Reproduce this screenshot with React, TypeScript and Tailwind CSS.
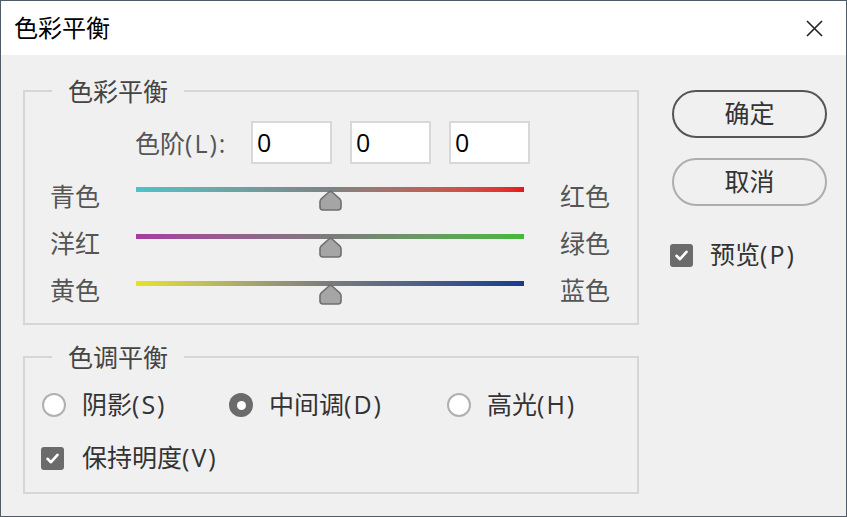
import React from 'react';

const FONT = { fontFamily: '"Open Sans", "Noto Sans CJK SC", sans-serif' };

function Thumb() {
  return (
    <svg className="absolute left-1/2 top-[3px] -ml-[11.5px]" width="23" height="21" viewBox="0 0 23 21">
      <path
        d="M10 2 Q11.5 0.8 13 2 L21 9.2 Q22 10.2 22 11.8 L22 17 Q22 20 19 20 L4 20 Q1 20 1 17 L1 11.8 Q1 10.2 2 9.2 Z"
        fill="#a5a5a5"
        stroke="#6f6f6f"
        strokeWidth="1.6"
      />
    </svg>
  );
}

function SliderRow({ left, right, track }: { left: string; right: string; track: string }) {
  return (
    <div className="flex h-[47px] items-start">
      <div className="mt-[5px] w-[111px] pl-[25px] text-[25px] leading-[30px] text-[#555]">{left}</div>
      <div className="pt-[11px]">
        <div className={`relative h-[5px] w-[388px] ${track}`}>
          <Thumb />
        </div>
      </div>
      <div className="ml-[36px] mt-[5px] text-[25px] leading-[30px] text-[#555]">{right}</div>
    </div>
  );
}

function Checkbox() {
  return (
    <span className="flex h-[23px] w-[23px] items-center justify-center rounded-[3px] bg-[#6b6b6b]">
      <svg width="15" height="15" viewBox="0 0 15 15">
        <path d="M2.5 7.8 L6 11.2 L12.5 3.8" fill="none" stroke="#fff" strokeWidth="2.6" strokeLinecap="round" strokeLinejoin="round" />
      </svg>
    </span>
  );
}

function Radio({ checked }: { checked?: boolean }) {
  if (checked) {
    return (
      <span className="flex h-[24px] w-[24px] items-center justify-center rounded-full bg-[#6b6b6b]">
        <span className="h-[9px] w-[9px] rounded-full bg-white" />
      </span>
    );
  }
  return <span className="h-[24px] w-[24px] rounded-full border-2 border-[#b0b0b0] bg-white" />;
}

// CJK text followed by a mnemonic like (S); the latin part runs wider in the original
function Label({ cjk, key_ }: { cjk: string; key_: string }) {
  return (
    <span>
      {cjk}
      <span className="tracking-[2px]">{key_}</span>
    </span>
  );
}

export default function App() {
  return (
    <div style={FONT} className="flex h-[517px] w-[847px] flex-col border border-[#4f5b67] bg-[#f0f0f0]">
      {/* title bar */}
      <div className="flex h-[54px] items-center justify-between bg-white pl-[13px] pr-[23px]">
        <span className="text-[24px] leading-none text-black">色彩平衡</span>
        <svg width="17" height="17" viewBox="0 0 17 17">
          <path d="M1 1 L16 16 M16 1 L1 16" stroke="#222" strokeWidth="1.6" />
        </svg>
      </div>

      <div className="flex flex-1 pl-[22px]">
        <div className="w-[616px]">
          <fieldset className="mt-[20px] border-2 border-[#d6d6d6] pb-[6px]">
            <legend className="ml-[27px] px-[16px] text-[25px] leading-[32px] text-[#444]">色彩平衡</legend>
            <div className="mt-[14px] flex items-center pl-[110px]">
              <span className="w-[116px] text-[25px] leading-[30px] text-[#555]">
                <Label cjk="色阶" key_="(L):" />
              </span>
              {[0, 1, 2].map((i) => (
                <div
                  key={i}
                  className="mr-[18px] flex h-[43px] w-[81px] items-center border-2 border-[#d8d8d8] bg-white pl-[4px] text-[25px] text-black"
                >
                  0
                </div>
              ))}
            </div>
            <div className="mt-[12px]">
              <SliderRow left="青色" right="红色" track="bg-linear-to-r from-[#4cc3c7] via-[#7d8384] to-[#e8141a]" />
              <SliderRow left="洋红" right="绿色" track="bg-linear-to-r from-[#a53c9f] via-[#7b7b7b] to-[#44b83a]" />
              <SliderRow left="黄色" right="蓝色" track="bg-linear-to-r from-[#e8e31a] via-[#7b7b7b] to-[#173a8e]" />
            </div>
          </fieldset>

          <fieldset className="mt-[16px] border-2 border-[#d6d6d6] pb-[19px]">
            <legend className="ml-[27px] px-[16px] text-[25px] leading-[32px] text-[#444]">色调平衡</legend>
            <div className="mt-[17px] flex h-[30px] items-center pl-[17px] text-[25px] text-[#333]">
              <div className="flex w-[187px] items-center gap-[16px]">
                <Radio />
                <Label cjk="阴影" key_="(S)" />
              </div>
              <div className="flex w-[218px] items-center gap-[16px]">
                <Radio checked />
                <Label cjk="中间调" key_="(D)" />
              </div>
              <div className="flex items-center gap-[16px]">
                <Radio />
                <Label cjk="高光" key_="(H)" />
              </div>
            </div>
            <div className="mt-[23px] flex h-[30px] items-center gap-[18px] pl-[16px] text-[25px] text-[#333]">
              <Checkbox />
              <Label cjk="保持明度" key_="(V)" />
            </div>
          </fieldset>
        </div>

        <div className="ml-[33px] flex w-[155px] flex-col pt-[35px]">
          <button className="h-[48px] rounded-full border-2 border-[#555] text-[25px] text-[#333]">确定</button>
          <button className="mt-[20px] h-[48px] rounded-full border-2 border-[#adadad] text-[25px] text-[#333]">取消</button>
          <div className="-ml-[2px] mt-[34px] flex h-[30px] items-center gap-[17px] text-[25px] text-[#333]">
            <Checkbox />
            <Label cjk="预览" key_="(P)" />
          </div>
        </div>
      </div>
    </div>
  );
}
